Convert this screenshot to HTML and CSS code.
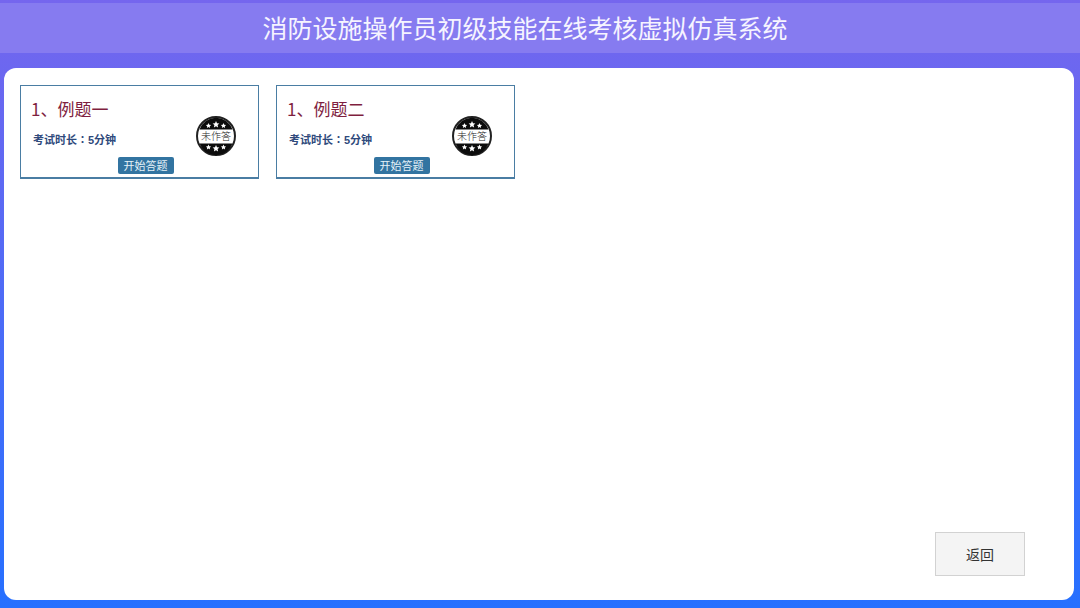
FILE: index.html
```html
<!DOCTYPE html>
<html lang="zh-CN">
<head>
    <meta charset="UTF-8">
    <meta name="viewport" content="width=device-width, initial-scale=1.0">
    <title>消防设施操作员初级技能在线考核虚拟仿真系统</title>
    <link rel="stylesheet" href="styles.css">
</head>
<body>
    <header class="header">
        <h1>消防设施操作员初级技能在线考核虚拟仿真系统</h1>
    </header>
    <main class="panel">
        <div class="list">
            <section class="card">
                <div class="info">
                    <div>
                        <h2>1、例题一</h2>
                        <p class="time">考试时长<span lang="zh-TW">：</span>5分钟</p>
                    </div>
                    <svg class="stamp" viewBox="0 0 40 40">
                        <circle cx="20" cy="20" r="19" fill="#fff" stroke="#222" stroke-width="2"/>
                        <path d="M3.5 13.5a17.5 17.5 0 0 1 33 0z" fill="#0c0c0c"/>
                        <path d="M3.5 27.5a17.5 17.5 0 0 0 33 0z" fill="#0c0c0c"/>
                        <path class="star" d="M20 5l1 2.2 2.4.3-1.8 1.6.5 2.4-2.1-1.2-2.1 1.2.5-2.4-1.8-1.6 2.4-.3zM12.5 7l.8 1.7 1.8.2-1.3 1.3.3 1.8-1.6-.9-1.6.9.3-1.8-1.3-1.3 1.8-.2zM27.5 7l.8 1.7 1.8.2-1.3 1.3.3 1.8-1.6-.9-1.6.9.3-1.8-1.3-1.3 1.8-.2z"/>
                        <path class="star" d="M20 29l1 2.2 2.4.3-1.8 1.6.5 2.4-2.1-1.2-2.1 1.2.5-2.4-1.8-1.6 2.4-.3zM12.5 28.5l.8 1.7 1.8.2-1.3 1.3.3 1.8-1.6-.9-1.6.9.3-1.8-1.3-1.3 1.8-.2zM27.5 28.5l.8 1.7 1.8.2-1.3 1.3.3 1.8-1.6-.9-1.6.9.3-1.8-1.3-1.3 1.8-.2z"/>
                        <text x="20" y="24">未作答</text>
                    </svg>
                </div>
                <button type="button" class="start">开始答题</button>
            </section>
            <section class="card">
                <div class="info">
                    <div>
                        <h2>1、例题二</h2>
                        <p class="time">考试时长<span lang="zh-TW">：</span>5分钟</p>
                    </div>
                    <svg class="stamp" viewBox="0 0 40 40">
                        <circle cx="20" cy="20" r="19" fill="#fff" stroke="#222" stroke-width="2"/>
                        <path d="M3.5 13.5a17.5 17.5 0 0 1 33 0z" fill="#0c0c0c"/>
                        <path d="M3.5 27.5a17.5 17.5 0 0 0 33 0z" fill="#0c0c0c"/>
                        <path class="star" d="M20 5l1 2.2 2.4.3-1.8 1.6.5 2.4-2.1-1.2-2.1 1.2.5-2.4-1.8-1.6 2.4-.3zM12.5 7l.8 1.7 1.8.2-1.3 1.3.3 1.8-1.6-.9-1.6.9.3-1.8-1.3-1.3 1.8-.2zM27.5 7l.8 1.7 1.8.2-1.3 1.3.3 1.8-1.6-.9-1.6.9.3-1.8-1.3-1.3 1.8-.2z"/>
                        <path class="star" d="M20 29l1 2.2 2.4.3-1.8 1.6.5 2.4-2.1-1.2-2.1 1.2.5-2.4-1.8-1.6 2.4-.3zM12.5 28.5l.8 1.7 1.8.2-1.3 1.3.3 1.8-1.6-.9-1.6.9.3-1.8-1.3-1.3 1.8-.2zM27.5 28.5l.8 1.7 1.8.2-1.3 1.3.3 1.8-1.6-.9-1.6.9.3-1.8-1.3-1.3 1.8-.2z"/>
                        <text x="20" y="24">未作答</text>
                    </svg>
                </div>
                <button type="button" class="start">开始答题</button>
            </section>
        </div>
        <button type="button" class="back">返回</button>
    </main>
</body>
</html>
```
FILE: styles.css
```css
* {
  box-sizing: border-box;
}

body {
  margin: 0;
  padding: 3px 0 8px;
  min-height: 100vh;
  display: flex;
  flex-direction: column;
  font-family: "Noto Sans CJK SC", sans-serif;
  background: linear-gradient(#7566ee, #2670ff);
}

h1, h2, p {
  margin: 0;
  font-weight: normal;
}

.header {
  padding: 6px 30px 8px 0;
  background-color: #867bf0;
  text-align: center;
}

h1 {
  font-size: 25px;
  line-height: 36px;
  color: #f6f4ff;
}

.panel {
  flex: 1;
  margin: 15px 6px 0 4px;
  padding: 17px 49px 24px 16px;
  display: flex;
  flex-direction: column;
  justify-content: space-between;
  background-color: #fff;
  border-radius: 12px;
}

.list {
  display: flex;
  flex-wrap: wrap;
  gap: 17px;
}

.card {
  width: 239px;
  padding: 9px 22px 3px 10px;
  border: 1px solid #4a7da3;
  border-bottom-width: 2px;
  display: flex;
  flex-direction: column;
}

.info {
  display: flex;
  justify-content: space-between;
  align-items: flex-end;
}

h2 {
  font-size: 17px;
  line-height: 28px;
  color: #7f1f3f;
}

.time {
  padding: 8px 2px 9px;
  font-family: "Liberation Sans", "Noto Sans CJK SC", sans-serif;
  font-size: 11px;
  line-height: 16px;
  font-weight: bold;
  color: #2f4a7c;
}

.time span {
  font-family: "Noto Sans CJK TC", sans-serif;
}

.stamp {
  width: 40px;
  height: 40px;
  margin-bottom: 1px;
}

.stamp text {
  font-size: 10px;
  font-weight: 300;
  text-anchor: middle;
  fill: #222;
}

.star {
  fill: #fff;
}

.start {
  align-self: center;
  margin-left: 24px;
  padding: 0 6px;
  border: none;
  border-radius: 2px;
  background-color: #3274a1;
  color: #e6f2f8;
  font-family: inherit;
  font-size: 11px;
  line-height: 17px;
  cursor: pointer;
}

.back {
  align-self: flex-end;
  padding: 10px 30px;
  border: 1px solid #d2d2d2;
  background-color: #f4f4f4;
  color: #333;
  font-family: inherit;
  font-size: 14px;
  line-height: 22px;
  cursor: pointer;
}

.back:hover {
  background-color: #e8e8e8;
}
```
